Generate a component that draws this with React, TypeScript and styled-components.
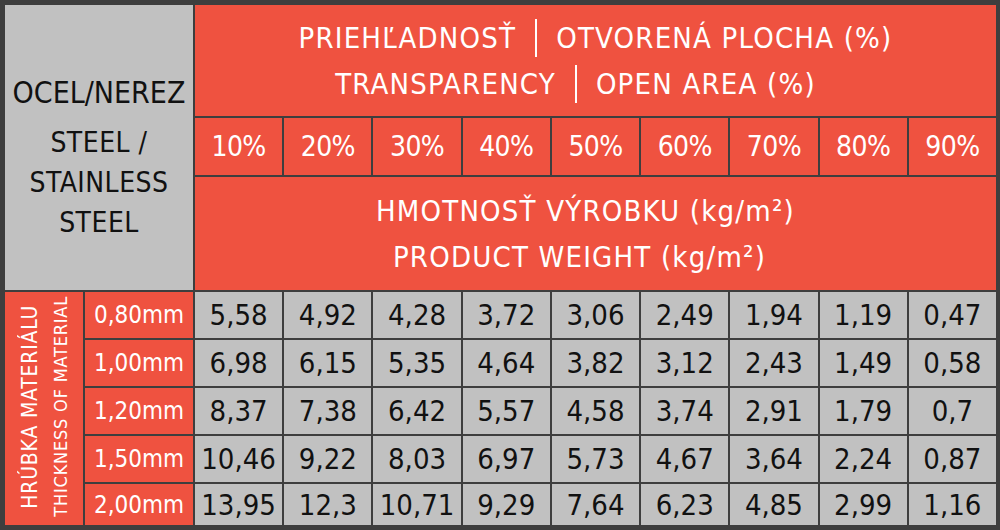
import React from "react";
import styled, { createGlobalStyle } from "styled-components";

const Global = createGlobalStyle`
  html, body { margin: 0; padding: 0; background: #ffffff; }
  #root { width: 1000px; height: 530px; }
`;

const RED = "#ef5240";
const GRAY = "#c1c1c1";
const FONT = `"DejaVu Sans Condensed", "DejaVu Sans", sans-serif`;

const Table = styled.div`
  box-sizing: border-box;
  width: 1000px;
  height: 530px;
  padding: 5px 4px 5px 5px;
  background: #3e3e3e;
  display: grid;
  grid-template-columns: 78px 108px repeat(9, 1fr);
  grid-template-rows: 111px 57px 113px repeat(4, 46px) 1fr;
  gap: 2px;
  font-family: ${FONT};
  overflow: hidden;
`;

const Cell = styled.div<{ $tone: "red" | "gray" }>`
  background: ${(p) => (p.$tone === "red" ? RED : GRAY)};
  color: ${(p) => (p.$tone === "red" ? "#ffffff" : "#111111")};
  display: flex;
  align-items: center;
  justify-content: center;
  font-size: 29px;
  white-space: nowrap;
  min-width: 0;
  min-height: 0;
  overflow: hidden;
`;

const Corner = styled(Cell)`
  grid-column: 1 / 3;
  grid-row: 1 / 4;
  flex-direction: column;
  padding-top: 20px;
  box-sizing: border-box;
`;

const CornerTitle = styled.div`
  font-size: 30px;
  line-height: 40px;
  margin-bottom: 10px;
`;

const CornerSub = styled.div`
  font-size: 28px;
  line-height: 40px;
  letter-spacing: 0.5px;
  text-align: center;
`;

const WideHead = styled(Cell)`
  grid-column: 3 / 12;
  flex-direction: column;
  font-size: 29px;
  letter-spacing: 1.2px;
  gap: 8px;
`;

const HeadLine = styled.div<{ $shift?: number }>`
  display: flex;
  align-items: center;
  gap: 19px;
  line-height: 38px;
  margin-right: ${(p) => (p.$shift ?? 0) * 2}px;
`;

const Divider = styled.span`
  display: inline-block;
  width: 2px;
  height: 38px;
  background: #ffffff;
`;

const Pct = styled(Cell)`
  font-size: 28px;
  letter-spacing: -0.6px;
`;

const SideLabel = styled(Cell)`
  grid-column: 1;
  grid-row: 4 / 9;
`;

const SideInner = styled.div`
  writing-mode: vertical-rl;
  transform: rotate(180deg);
  display: flex;
  flex-direction: column;
  align-items: center;
  gap: 11px;
  margin-top: -4px;
`;

const SideMain = styled.span`
  font-size: 21px;
  letter-spacing: 0.8px;
  line-height: 22px;
`;

const SideSub = styled.span`
  font-size: 18px;
  letter-spacing: 0.8px;
  line-height: 18px;
`;

const Thick = styled(Cell)`
  font-size: 24px;
`;

const Value = styled(Cell)`
  font-size: 29px;
`;

const pcts = ["10%", "20%", "30%", "40%", "50%", "60%", "70%", "80%", "90%"];

const rows: { t: string; v: string[] }[] = [
  { t: "0,80mm", v: ["5,58", "4,92", "4,28", "3,72", "3,06", "2,49", "1,94", "1,19", "0,47"] },
  { t: "1,00mm", v: ["6,98", "6,15", "5,35", "4,64", "3,82", "3,12", "2,43", "1,49", "0,58"] },
  { t: "1,20mm", v: ["8,37", "7,38", "6,42", "5,57", "4,58", "3,74", "2,91", "1,79", "0,7"] },
  { t: "1,50mm", v: ["10,46", "9,22", "8,03", "6,97", "5,73", "4,67", "3,64", "2,24", "0,87"] },
  { t: "2,00mm", v: ["13,95", "12,3", "10,71", "9,29", "7,64", "6,23", "4,85", "2,99", "1,16"] },
];

export default function App() {
  return (
    <>
      <Global />
      <Table>
        <Corner $tone="gray">
          <CornerTitle>OCEL/NEREZ</CornerTitle>
          <CornerSub>
            STEEL /<br />
            STAINLESS
            <br />
            STEEL
          </CornerSub>
        </Corner>
        <WideHead $tone="red">
          <HeadLine>
            PRIEHĽADNOSŤ <Divider /> OTVORENÁ PLOCHA (%)
          </HeadLine>
          <HeadLine $shift={20}>
            TRANSPARENCY <Divider /> OPEN AREA (%)
          </HeadLine>
        </WideHead>
        {pcts.map((p) => (
          <Pct key={p} $tone="red">
            {p}
          </Pct>
        ))}
        <WideHead $tone="red">
          <HeadLine $shift={10}>HMOTNOSŤ VÝROBKU (kg/m²)</HeadLine>
          <HeadLine $shift={16}>PRODUCT WEIGHT (kg/m²)</HeadLine>
        </WideHead>
        <SideLabel $tone="red">
          <SideInner>
            <SideMain>HRÚBKA MATERIÁLU</SideMain>
            <SideSub>THICKNESS OF MATERIAL</SideSub>
          </SideInner>
        </SideLabel>
        {rows.map((r) => (
          <React.Fragment key={r.t}>
            <Thick $tone="red">{r.t}</Thick>
            {r.v.map((v, i) => (
              <Value key={i} $tone="gray">
                {v}
              </Value>
            ))}
          </React.Fragment>
        ))}
      </Table>
    </>
  );
}
